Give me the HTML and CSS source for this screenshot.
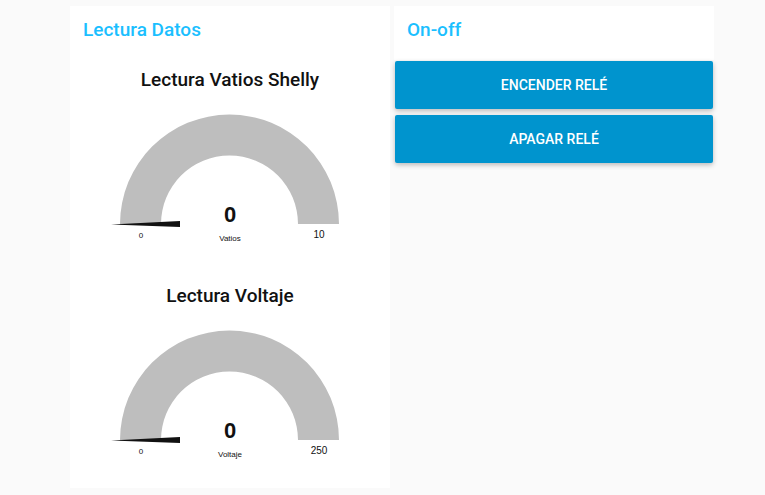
FILE: index.html
```html
<!DOCTYPE html>
<html lang="es">
<head>
<meta charset="utf-8">
<title>Lectura Datos</title>
<link rel="stylesheet" href="styles.css">
</head>
<body>
<main class="dashboard">
  <section class="group readings">
    <h1 class="group-title">Lectura Datos</h1>
    <article class="gauge">
      <h2 class="gauge-title">Lectura Vatios Shelly</h2>
      <svg class="dial" viewBox="0 0 240 132">
        <path class="track" d="M10 110A109.500 109.500 0 0 1 229 110H188A68.500 68.500 0 0 0 51 110Z"/>
        <path class="needle" d="M1 110.500L70 107V113Z"/>
        <text class="value" x="120" y="108">0</text>
        <text class="unit" x="120" y="127">Vatios</text>
        <text class="unit" x="31" y="124">0</text>
        <text class="max" x="209" y="124">10</text>
      </svg>
    </article>
    <article class="gauge">
      <h2 class="gauge-title">Lectura Voltaje</h2>
      <svg class="dial" viewBox="0 0 240 132">
        <path class="track" d="M10 110A109.500 109.500 0 0 1 229 110H188A68.500 68.500 0 0 0 51 110Z"/>
        <path class="needle" d="M1 110.500L70 107V113Z"/>
        <text class="value" x="120" y="108">0</text>
        <text class="unit" x="120" y="127">Voltaje</text>
        <text class="unit" x="31" y="124">0</text>
        <text class="max" x="209" y="124">250</text>
      </svg>
    </article>
  </section>
  <section class="group">
    <h1 class="group-title">On-off</h1>
    <div class="actions">
      <button class="action" type="button">Encender relé</button>
      <button class="action" type="button">Apagar relé</button>
    </div>
  </section>
</main>
</body>
</html>
```
FILE: styles.css
```css
* { box-sizing: border-box; }

body {
  margin: 0;
  background: #fafafa;
  color: #111;
  font-family: Roboto, "Liberation Sans", sans-serif;
}

.dashboard {
  display: grid;
  grid-template-columns: repeat(2, minmax(0, 320px));
  justify-content: center;
  align-items: start;
  gap: 4px;
  padding: 6px 0 6px 19px;
}

.readings { padding-bottom: 26px; background: #fff; }

.group-title {
  margin: 0;
  padding: 0 13px 6px;
  background: #fff;
  color: #1bbfff;
  font-size: 19px;
  font-weight: 500;
  line-height: 48px;
}

.gauge { padding-top: 8px; text-align: center; }
.gauge + .gauge { margin-top: 30px; }

.gauge-title {
  margin: 0;
  font-size: 19px;
  font-weight: 500;
  line-height: 24px;
}

.dial {
  display: block;
  width: 75%;
  margin: 22px auto 0;
  font-family: "Liberation Sans", sans-serif;
  text-anchor: middle;
  fill: #111;
}

.track { fill: #bebebe; }
.value { font-size: 22px; font-weight: 700; }
.unit { font-size: 8px; }
.max { font-size: 10px; }

.actions {
  display: flex;
  flex-direction: column;
  gap: 6px;
  padding: 1px;
}

.action {
  height: 48px;
  border: 0;
  border-radius: 2px;
  background: #0094ce;
  color: #fff;
  font: 500 14px/20px Roboto, "Liberation Sans", sans-serif;
  text-transform: uppercase;
  box-shadow: 0 2px 5px rgba(0, 0, 0, 0.26);
}
```
